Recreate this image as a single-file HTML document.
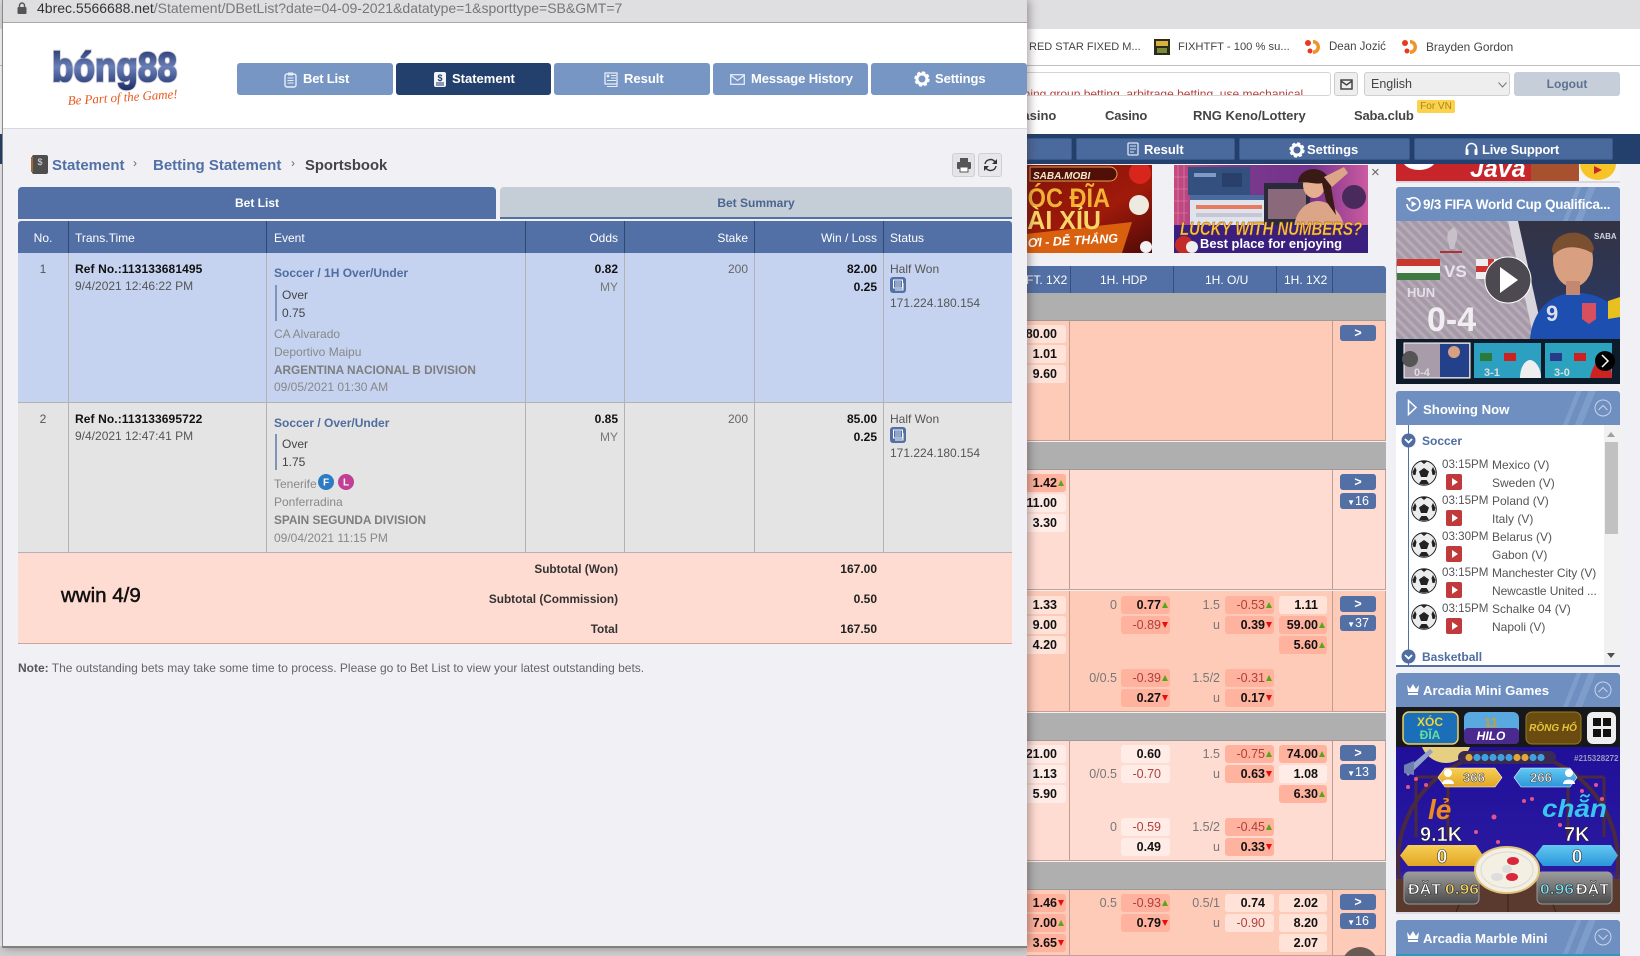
<!DOCTYPE html>
<html><head><meta charset="utf-8"><title>Statement</title>
<style>
html{margin:0;padding:0;width:1640px;height:956px;overflow:hidden}
body{margin:0;padding:0;position:relative;width:1640px;height:956px;overflow:hidden;background:#f0f0f5;font-family:"Liberation Sans","Noto Sans CJK SC",sans-serif;font-size:12px;color:#333}
div,span.t{position:absolute;box-sizing:border-box}
.t{position:absolute;white-space:nowrap;line-height:16px;height:16px}
.r{text-align:right}.b{font-weight:bold}
.gy{color:#888}.bl{color:#4f6d9f}
.nav{top:63px;height:32px;background:#7896c4;border-radius:3px;color:#fff;font-weight:bold;font-size:13px;line-height:32px}
.nav.on{background:#23406c}
.nav span{position:absolute;top:0;white-space:nowrap}
.nav svg,.nb svg{position:absolute}
.col{top:253px;width:1px;height:300px;background:#b2b2b2}
.hc{top:221px;width:1px;height:32px;background:#2d4875}
.grp{left:1020px;width:366px;border-bottom:1px solid #c79f93;border-right:1px solid #c79f93}
.grey{left:1020px;width:366px;height:28px;background:#afafaf;border-bottom:1px solid #9b9b9b}
.v{width:1px;background:#c19c90}
.o{height:18px;line-height:19px;border-radius:3px;text-align:right;padding-right:9px;font-weight:bold;color:#111;font-size:12.5px;background:rgba(255,255,255,.45)}
.x0{left:1010px;width:56px}.xa{left:1121px;width:49px}.xb{left:1225px;width:49px}.xd{left:1279px;width:48px}
.h{background:#ffb29d}.n{color:#b0403c;font-weight:normal}
.u::after,.d::after{content:"";position:absolute;right:2px;top:6px;width:0;height:0;border-left:3px solid transparent;border-right:3px solid transparent}
.u::after{border-bottom:6px solid #5aa614}.d::after{border-top:6px solid #e80c0c}
.l{color:#777;width:50px;text-align:right;height:18px;line-height:19px;font-size:12.5px}
.la{left:1067px}.lb{left:1170px}
.btn{left:1340px;width:36px;height:16px;border-radius:3px;background:#5270a5;color:#fff;text-align:center;line-height:16px;font-size:12.5px}
.nb{top:138px;height:22px;background:#4a6a9d;border:1px solid #3a5888;border-radius:2px;color:#fff;font-weight:bold;font-size:13px;line-height:22px}
.nb span{position:absolute;white-space:nowrap;top:0}
.ph{left:1396px;width:224px;background:linear-gradient(112deg,#6f8fc0 0 76%,#7f9dca 76% 78%,#6f8fc0 78% 81%,#7f9dca 81% 84%,#6f8fc0 84%);border-radius:3px 3px 0 0;color:#fff;font-weight:bold}
.team{left:1492px;font-size:12px;color:#555}
.tm{left:1442px;font-size:11.6px;color:#555}
.rb{left:1446px;width:16px;height:16px;border-radius:2px;background:#c0393b}
.rb::after{content:"";position:absolute;left:6px;top:4px;border-left:6px solid #fff;border-top:4px solid transparent;border-bottom:4px solid transparent}
svg{display:block}
</style></head><body>

<svg width="0" height="0" style="position:absolute"><defs>
<g id="ball"><circle cx="13" cy="13" r="12.300" fill="#ececec" stroke="#222"/><path d="M13 8l5 3.500-2 5.500h-6l-2-5.500z" fill="#222"/><path d="M10 1.500c2-.6 4-.6 6 0l-3 2.500zM1.500 12l2.500-5 1.500 3-1 5-2 0zM24.500 12l-2.500-5-1.500 3 1 5 2 0zM8 23.500l2.500-3.500 5 0 2.500 3.500c-3 1.300-7 1.300-10 0z" fill="#222"/></g>
<g id="gear"><circle cx="8" cy="8" r="6.200" fill="none" stroke="#fff" stroke-width="3" stroke-dasharray="2.800 2.070"/><circle cx="8" cy="8" r="5" fill="none" stroke="#fff" stroke-width="3"/></g>
<g id="fav"><circle cx="3" cy="3" r="3" fill="#e8391d"/><circle cx="5" cy="11" r="2.500" fill="#e8391d"/><path d="M8 0c4 0 7 3 7 7s-3 7-7 7v-3.500c2 0 3.500-1.500 3.500-3.500S10 3.500 8 3.500z" fill="#f0932b"/></g>
</defs></svg>

<!-- ================= BACK PAGE ================= -->
<div style="left:0;top:0;width:1640px;height:29px;background:#dfdfe1"></div>
<div style="left:0;top:29px;width:1640px;height:37px;background:#fff;border-bottom:1px solid #c0c0c0"></div>
<span class="t" style="left:1029px;top:39px;font-size:11px;color:#444">RED STAR FIXED M...</span>
<svg style="position:absolute;left:1154px;top:39px" width="16" height="16"><rect width="16" height="16" fill="#2c2a18"/><rect x="2" y="2" width="12" height="5" fill="#d8b040"/><rect x="3" y="9" width="10" height="5" fill="#7a8a3a"/></svg>
<span class="t" style="left:1178px;top:39px;font-size:11.2px;color:#444">FIXHTFT - 100 % su...</span>
<svg style="position:absolute;left:1305px;top:40px" width="16" height="14"><use href="#fav"/></svg>
<span class="t" style="left:1329px;top:39px;font-size:11.5px;color:#444">Dean Jozić</span>
<svg style="position:absolute;left:1402px;top:40px" width="16" height="14"><use href="#fav"/></svg>
<span class="t" style="left:1426px;top:39px;font-size:11.9px;color:#444">Brayden Gordon</span>

<div style="left:0;top:66px;width:1640px;height:68px;background:#fff"></div>
<div style="left:1000px;top:72px;width:331px;height:24px;background:#fff;border:1px solid #d5d5d5;border-radius:3px;overflow:hidden"><span class="t" style="left:20px;top:13px;color:#b5403a;font-size:12px">ining group betting, arbitrage betting, use mechanical</span></div>
<div style="left:1334px;top:72px;width:24px;height:24px;background:#eee;border:1px solid #ccc;border-radius:3px"><svg style="position:absolute;left:5px;top:6px" width="13" height="11"><rect x="1" y="1" width="11" height="9" fill="none" stroke="#444" stroke-width="1.5"/><path d="M1 2l5.500 4L12 2" fill="none" stroke="#444" stroke-width="1.500"/></svg></div>
<div style="left:1364px;top:72px;width:146px;height:24px;background:#eee;border:1px solid #d0d0d0;border-radius:3px"><span class="t" style="left:6px;top:3px;color:#444;font-size:12.500px">English</span><svg style="position:absolute;left:133px;top:9px" width="9" height="6"><path d="M0.500 0.500L4.500 5l4-4.500" fill="none" stroke="#777"/></svg></div>
<div style="left:1514px;top:72px;width:106px;height:24px;background:#c5ced9;border-radius:3px;text-align:center;line-height:24px;font-weight:bold;color:#5d7290;font-size:12px">Logout</div>

<span class="t b" style="left:1013px;top:108px;font-size:13px;color:#444">Casino</span>
<span class="t b" style="left:1105px;top:108px;font-size:13px;color:#444;letter-spacing:-.2px">Casino</span>
<span class="t b" style="left:1193px;top:108px;font-size:13px;color:#444">RNG Keno/Lottery</span>
<span class="t b" style="left:1354px;top:108px;font-size:13px;color:#444;letter-spacing:-.2px">Saba.club</span>
<div style="left:1417px;top:100px;width:38px;height:13px;background:#fbd24a;border-radius:2px;color:#a8842a;font-size:10px;text-align:center;line-height:13px">For VN</div>

<div style="left:0;top:134px;width:1640px;height:30px;background:#23406c"></div>
<div class="nb" style="left:1000px;width:72px"></div>
<div class="nb" style="left:1076px;width:159px"><svg style="left:50px;top:3px" width="12" height="14"><rect x="1" y="1" width="10" height="12" rx="1" fill="none" stroke="#dfe6f2" stroke-width="1.300"/><path d="M3 4h6M3 7h6M3 10h4" stroke="#dfe6f2"/></svg><span style="left:67px">Result</span></div>
<div class="nb" style="left:1239px;width:171px"><svg style="left:49px;top:3px" width="16" height="16" viewBox="0 0 16 16"><use href="#gear"/></svg><span style="left:67px">Settings</span></div>
<div class="nb" style="left:1414px;width:199px"><svg style="left:50px;top:3px" width="13" height="14"><path d="M1.500 9V6.500a5 5 0 0 1 10 0V9" fill="none" stroke="#fff" stroke-width="1.600"/><rect x="0.500" y="7" width="3" height="6" rx="1" fill="#fff"/><rect x="9.500" y="7" width="3" height="6" rx="1" fill="#fff"/></svg><span style="left:67px;letter-spacing:-.2px">Live Support</span></div>

<!-- ad 1 -->
<svg style="position:absolute;left:1000px;top:165px" width="152" height="88" viewBox="0 0 152 88">
<defs><linearGradient id="a1" x1="0" y1="0" x2="1" y2="1"><stop offset="0" stop-color="#7a1208"/><stop offset=".6" stop-color="#a01a0a"/><stop offset="1" stop-color="#4d0a08"/></linearGradient></defs>
<rect width="152" height="88" fill="url(#a1)"/>
<path d="M0 72L132 57l-10 31H0z" fill="#d9600f"/>
<path d="M30 2h80a7 7 0 0 1 0 14H30z" fill="#501008" stroke="#e7a04a"/>
<circle cx="140" cy="8" r="11" fill="#d8261c"/><circle cx="139" cy="40" r="10" fill="#efeae0"/>
<text x="33" y="14" font-size="10" font-weight="bold" font-style="italic" fill="#f4e7c8" font-family="Liberation Sans">SABA.MOBI</text>
<text x="12" y="42" font-size="27" font-weight="bold" fill="#f3b134" font-family="Liberation Sans" textLength="98" lengthAdjust="spacingAndGlyphs">XÓC ĐĨA</text>
<text x="12" y="64" font-size="26" font-weight="bold" fill="#f8d667" font-family="Liberation Sans" textLength="89" lengthAdjust="spacingAndGlyphs">TÀI XỈU</text>
<text x="28" y="82" font-size="12.500" font-weight="bold" font-style="italic" fill="#fff" font-family="Liberation Sans" transform="rotate(-3 30 82)">ƠI - DỄ THẮNG</text>
<circle cx="146" cy="82" r="6" fill="#f2f2f2"/>
</svg>
<!-- ad 2 -->
<svg style="position:absolute;left:1174px;top:165px" width="194" height="88" viewBox="0 0 194 88">
<defs><linearGradient id="a2" x1="0" y1="0" x2="1" y2="0"><stop offset="0" stop-color="#c84a7e"/><stop offset=".3" stop-color="#7a3a8c"/><stop offset=".7" stop-color="#74328c"/><stop offset="1" stop-color="#cc5aa0"/></linearGradient></defs>
<rect width="194" height="88" fill="url(#a2)"/>
<g stroke="#e58ab0" stroke-width=".6"><path d="M4 0v62M10 0v62M0 12h14M0 24h14M0 36h14M0 48h14"/></g>
<rect x="14" y="2" width="62" height="28" fill="#33507f"/><rect x="20" y="8" width="22" height="4" fill="#7f9bc9"/><rect x="48" y="8" width="20" height="14" fill="#2a3f6a"/>
<rect x="16" y="30" width="78" height="30" fill="#dfe3ea"/><rect x="16" y="30" width="78" height="5" fill="#4a6a9f"/><rect x="22" y="40" width="66" height="4" fill="#e87a62"/><rect x="22" y="48" width="66" height="4" fill="#c6c6d6"/>
<rect x="90" y="18" width="46" height="42" fill="#2a2a3a"/><rect x="94" y="24" width="38" height="30" fill="#8a6a7a"/>
<path d="M120 62c2-18 14-26 24-26s24 10 26 26z" fill="#dca587"/>
<ellipse cx="140" cy="20" rx="11" ry="13" fill="#e6b090"/>
<path d="M124 18c0-16 26-20 32-2l6 34-10-14-4-18c-6 2-14-2-24 0z" fill="#3a1a14"/>
<path d="M150 12l20-10 4 6-16 14z" fill="#dca587"/>
<circle cx="180" cy="32" r="12" fill="#4a2a5c"/>
<rect y="60" width="194" height="28" fill="#3a1f7e"/>
<text x="6" y="70" font-size="18" font-weight="bold" font-style="italic" fill="#f2c83c" stroke="#9a3a20" stroke-width=".4" font-family="Liberation Sans" textLength="182" lengthAdjust="spacingAndGlyphs">LUCKY WITH NUMBERS?</text>
<text x="26" y="83" font-size="13" font-weight="bold" fill="#fff" font-family="Liberation Sans" textLength="142" lengthAdjust="spacingAndGlyphs">Best place for enjoying</text>
<circle cx="10" cy="80" r="9" fill="#c42a2a"/><circle cx="18" cy="82" r="6" fill="#eee"/>
</svg>
<span class="t" style="left:1371px;top:165px;font-size:15px;color:#666">×</span>

<!-- top right banner -->
<svg style="position:absolute;left:1396px;top:164px" width="224" height="17" viewBox="0 0 224 17">
<rect width="224" height="17" fill="#c8252b"/><path d="M8 0c6 8 24 8 30 0z" fill="#fff"/>
<text x="74" y="13" font-size="25" font-weight="bold" font-style="italic" fill="#fff" font-family="Liberation Sans">Java</text>
<rect x="135" width="48" height="17" fill="#a8512f"/><rect x="183" width="41" height="17" fill="#f3f3f3"/>
<path d="M184 0h36a18 16 0 0 1-36 0z" fill="#f6c427"/><path d="M198 2l8 4-8 4z" fill="#c8252b"/>
</svg>
<div style="left:1396px;top:181px;width:224px;height:2px;background:#d8d8e2"></div>

<!-- video panel -->
<div class="ph" style="top:187px;height:34px;font-size:13.500px;line-height:36px"><svg style="position:absolute;left:9px;top:9px" width="16" height="16"><path d="M4 3.500A6.500 6.500 0 1 1 2 8" fill="none" stroke="#fff" stroke-width="1.600"/><path d="M1 2l5 0-1 4z" fill="#fff"/><path d="M6.500 5l5 3-5 3z" fill="#fff"/></svg><span style="position:absolute;left:27px;top:0;white-space:nowrap;letter-spacing:-.25px">9/3 FIFA World Cup Qualifica...</span></div>
<svg style="position:absolute;left:1396px;top:221px" width="224" height="163" viewBox="0 0 224 163">
<defs><pattern id="st" width="7" height="7" patternUnits="userSpaceOnUse" patternTransform="rotate(-45)"><rect width="7" height="7" fill="#a79aa8"/><rect width="3" height="7" fill="#b6abb6"/></pattern>
<linearGradient id="pb" x1="0" y1="0" x2="0" y2="1"><stop offset="0" stop-color="#334"/><stop offset="1" stop-color="#2a3a66"/></linearGradient></defs>
<rect width="224" height="118" fill="url(#st)"/>
<path d="M118 0h106v118H144z" fill="url(#pb)"/>
<path d="M112 0h10l26 118h-10z" fill="#d8d6dc"/>
<path d="M134 118c2-24 16-44 42-46 24-2 44 12 48 22v24z" fill="#1d4fb0"/>
<ellipse cx="177" cy="39" rx="20" ry="27" fill="#d8a081"/>
<path d="M156 30c0-22 38-26 42-2l-2 4c-10-6-28-10-38 2z" fill="#7a5030"/>
<rect x="170" y="60" width="14" height="14" fill="#c48870"/>
<text x="150" y="100" font-size="22" font-weight="bold" fill="#dde" font-family="Liberation Sans">9</text>
<path d="M186 82h14v16l-7 5-7-5z" fill="#d85060"/>
<path d="M212 80l12-4v20l-12 2z" fill="#e8c020"/>
<text x="198" y="18" font-size="8" font-weight="bold" fill="#cfd3dd" font-family="Liberation Sans">SABA</text>
<path d="M58 6c4 4 4 8 2 14l-2 8h-4l-2-8c-2-6 0-10 6-14z" fill="#c7c0c8"/>
<rect x="44" y="30" width="22" height="2" fill="#a33"/>
<rect x="1" y="38" width="43" height="7" fill="#c8382c"/><rect x="1" y="45" width="43" height="7" fill="#f4f4f4"/><rect x="1" y="52" width="43" height="7" fill="#3e7a42"/>
<text x="48" y="56" font-size="17" font-weight="bold" fill="#e8e4ea" font-family="Liberation Sans">VS</text>
<rect x="80" y="38" width="30" height="20" fill="#eee"/><rect x="92" y="38" width="6" height="20" fill="#c33"/><rect x="80" y="45" width="30" height="6" fill="#c33"/>
<text x="11" y="76" font-size="13" font-weight="bold" fill="#e4dfe6" font-family="Liberation Sans">HUN</text>
<text x="31" y="110" font-size="34" font-weight="bold" fill="#f1eef2" font-family="Liberation Sans">0-4</text>
<circle cx="112" cy="59" r="23" fill="#4c4a50" stroke="#fff" stroke-width="1"/><path d="M104 46l18 13-18 13z" fill="#fff"/>
<rect y="118" width="224" height="45" fill="#0d1b2a"/>
<rect x="8" y="122" width="66" height="35" fill="#a89caa" stroke="#fff"/><rect x="44" y="123" width="29" height="33" fill="#23408a"/><circle cx="58" cy="131" r="6" fill="#d8a081"/><circle cx="14" cy="138" r="8" fill="#555"/>
<rect x="78" y="122" width="67" height="35" fill="#2da0c2"/><rect x="84" y="132" width="12" height="8" fill="#2a7a3a"/><rect x="108" y="132" width="12" height="8" fill="#cf2020"/><path d="M124 157c0-12 6-18 10-18s11 6 11 18z" fill="#eee"/>
<rect x="149" y="122" width="67" height="35" fill="#2ba3bf"/><rect x="154" y="132" width="12" height="8" fill="#2a3a8a"/><rect x="178" y="132" width="12" height="8" fill="#cf2020"/><path d="M194 157c2-12 8-18 12-18s10 6 10 18z" fill="#c22"/>
<text x="18" y="155" font-size="11" fill="#ddd" font-weight="bold" font-family="Liberation Sans">0-4</text>
<text x="88" y="155" font-size="11" fill="#ddd" font-weight="bold" font-family="Liberation Sans">3-1</text>
<text x="158" y="155" font-size="11" fill="#ddd" font-weight="bold" font-family="Liberation Sans">3-0</text>
<circle cx="209" cy="140" r="10" fill="#000"/><path d="M206 134l6 6-6 6" fill="none" stroke="#fff" stroke-width="1.500"/>
</svg>

<!-- Showing Now -->
<div style="left:1396px;top:425px;width:224px;height:242px;background:#fff;border-bottom:2px solid #5270a5"></div>
<div class="ph" style="top:391px;height:34px;font-size:13.200px;line-height:37px"><svg style="position:absolute;left:11px;top:8px" width="11" height="17"><path d="M1.500 1.500L9 8.500 1.500 15.500z" fill="none" stroke="#fff" stroke-width="1.500"/></svg><span style="position:absolute;left:27px;top:0;white-space:nowrap">Showing Now</span><svg style="position:absolute;left:198px;top:8px" width="18" height="18"><circle cx="9" cy="9" r="8" fill="none" stroke="#c7d4e9"/><path d="M4.500 11L9 6.500 13.500 11" fill="none" stroke="#c7d4e9"/></svg></div>
<div style="left:1408px;top:425px;width:1px;height:240px;background:#5270a5"></div>
<div style="left:1604px;top:425px;width:16px;height:240px;background:#f1f1f1"></div>
<div style="left:1605px;top:442px;width:13px;height:92px;background:#c1c1c1"></div>
<svg style="position:absolute;left:1606px;top:431px" width="10" height="7"><path d="M1 6l4-5 4 5z" fill="#a0a0a0"/></svg>
<svg style="position:absolute;left:1606px;top:652px" width="10" height="7"><path d="M1 1l4 5 4-5z" fill="#505050"/></svg>
<svg style="position:absolute;left:1401px;top:433px" width="15" height="15"><circle cx="7.500" cy="7.500" r="7" fill="#4f6da0"/><path d="M4 6l3.500 3.500L11 6" fill="none" stroke="#fff" stroke-width="1.800"/></svg>
<span class="t b" style="left:1422px;top:433px;color:#4f6da0;font-size:12px">Soccer</span>
<svg style="position:absolute;left:1401px;top:649px" width="15" height="15"><circle cx="7.500" cy="7.500" r="7" fill="#4f6da0"/><path d="M4 6l3.500 3.500L11 6" fill="none" stroke="#fff" stroke-width="1.800"/></svg>
<span class="t b" style="left:1422px;top:649px;color:#4f6da0;font-size:12px">Basketball</span>
<svg style="position:absolute;left:1411px;top:460px" width="26" height="26"><use href="#ball"/></svg>
<svg style="position:absolute;left:1411px;top:496px" width="26" height="26"><use href="#ball"/></svg>
<svg style="position:absolute;left:1411px;top:532px" width="26" height="26"><use href="#ball"/></svg>
<svg style="position:absolute;left:1411px;top:568px" width="26" height="26"><use href="#ball"/></svg>
<svg style="position:absolute;left:1411px;top:604px" width="26" height="26"><use href="#ball"/></svg>
<div class="rb" style="top:474px"></div><div class="rb" style="top:510px"></div><div class="rb" style="top:546px"></div><div class="rb" style="top:582px"></div><div class="rb" style="top:618px"></div>
<span class="t tm" style="top:457px">03:15PM</span><span class="t team" style="top:457px">Mexico (V)</span><span class="t team" style="top:475px">Sweden (V)</span>
<span class="t tm" style="top:493px">03:15PM</span><span class="t team" style="top:493px">Poland (V)</span><span class="t team" style="top:511px">Italy (V)</span>
<span class="t tm" style="top:529px">03:30PM</span><span class="t team" style="top:529px">Belarus (V)</span><span class="t team" style="top:547px">Gabon (V)</span>
<span class="t tm" style="top:565px">03:15PM</span><span class="t team" style="top:565px;letter-spacing:-.1px">Manchester City (V)</span><span class="t team" style="top:583px;letter-spacing:-.1px">Newcastle United ...</span>
<span class="t tm" style="top:601px">03:15PM</span><span class="t team" style="top:601px">Schalke 04 (V)</span><span class="t team" style="top:619px">Napoli (V)</span>

<!-- Arcadia -->
<div class="ph" style="top:673px;height:34px;font-size:13.200px;line-height:36px"><svg style="position:absolute;left:10px;top:10px" width="14" height="13"><path d="M1 2l3 4 3-5 3 5 3-4-1 7H2zM2 10h10v2H2z" fill="#fff"/></svg><span style="position:absolute;left:27px;top:0;white-space:nowrap">Arcadia Mini Games</span><svg style="position:absolute;left:198px;top:8px" width="18" height="18"><circle cx="9" cy="9" r="8" fill="none" stroke="#c7d4e9"/><path d="M4.500 11L9 6.500 13.500 11" fill="none" stroke="#c7d4e9"/></svg></div>
<svg style="position:absolute;left:1396px;top:707px" width="224" height="205" viewBox="0 0 224 205" font-family="Liberation Sans">
<defs><linearGradient id="gb" x1="0" y1="0" x2="0" y2="1"><stop offset="0" stop-color="#1f0f9a"/><stop offset=".75" stop-color="#2b1aa0"/><stop offset="1" stop-color="#8a86cf"/></linearGradient>
<linearGradient id="yl" x1="0" y1="0" x2="0" y2="1"><stop offset="0" stop-color="#f7d055"/><stop offset="1" stop-color="#e2a424"/></linearGradient>
<linearGradient id="cy" x1="0" y1="0" x2="0" y2="1"><stop offset="0" stop-color="#64c8f2"/><stop offset="1" stop-color="#2a96da"/></linearGradient>
<linearGradient id="gr" x1="0" y1="0" x2="0" y2="1"><stop offset="0" stop-color="#9c9c9c"/><stop offset="1" stop-color="#4a4a4a"/></linearGradient></defs>
<rect y="40" width="224" height="165" fill="url(#gb)"/>
<circle cx="50" cy="30" r="26" fill="#e6cf80"/>
<circle cx="112" cy="155" r="110" fill="none" stroke="#4a2a3e" stroke-width="4"/>
<path d="M20 70h32M172 70h36M20 70v60M208 70v60M52 70v60M172 70v60" stroke="#4a2a3e" stroke-width="3" fill="none"/>
<rect width="224" height="40" fill="#17181c"/>
<rect x="7" y="5" width="55" height="32" rx="6" fill="#1b6fb8" stroke="#f1cf5b" stroke-width="1.500"/>
<text x="34" y="19" text-anchor="middle" font-size="12" font-weight="bold" fill="#e8d63a">XÓC</text><text x="34" y="32" text-anchor="middle" font-size="12" font-weight="bold" fill="#63e0a0">ĐĨA</text>
<rect x="68" y="5" width="55" height="32" rx="6" fill="#5aa8e0"/><rect x="68" y="21" width="55" height="16" rx="4" fill="#4a2a8e"/>
<text x="95" y="20" text-anchor="middle" font-size="13" font-weight="bold" fill="#c8a030">11</text><text x="95" y="33" text-anchor="middle" font-size="12" font-weight="bold" font-style="italic" fill="#fff">HILO</text>
<rect x="130" y="5" width="55" height="32" rx="6" fill="#6a4c10" stroke="#9a7a26"/><text x="157" y="24" text-anchor="middle" font-size="10" font-weight="bold" font-style="italic" fill="#e7c53a">RỒNG HỔ</text>
<rect x="191" y="5" width="29" height="32" rx="6" fill="#eee"/><rect x="197" y="11" width="8" height="8" fill="#111"/><rect x="207" y="11" width="8" height="8" fill="#111"/><rect x="197" y="22" width="8" height="8" fill="#111"/><rect x="207" y="22" width="8" height="8" fill="#111"/>
<path d="M8 64l26-22 3 3-25 24z" fill="#8fa0cc"/><path d="M8 58l10-4 0 14-10-2z" fill="#6e7fb0"/>
<rect x="62" y="44" width="98" height="13" rx="6.500" fill="#3a2a52"/>
<g fill="#3fa0e0"><circle cx="73" cy="50.500" r="3.600" fill="#e0a838"/><circle cx="81" cy="50.500" r="3.600"/><circle cx="89" cy="50.500" r="3.600"/><circle cx="97" cy="50.500" r="3.600"/><circle cx="105" cy="50.500" r="3.600"/><circle cx="113" cy="50.500" r="3.600"/><circle cx="121" cy="50.500" r="3.600" fill="#e0a838"/><circle cx="129" cy="50.500" r="3.600" fill="#e0a838"/><circle cx="137" cy="50.500" r="3.600"/><circle cx="145" cy="50.500" r="3.600"/></g>
<text x="178" y="54" font-size="8" font-weight="bold" fill="#9a9ab8">#215328272</text>
<path d="M49 61h50l7 9.500-7 9.500H49l-7-9.500z" fill="url(#yl)" stroke="#fff" stroke-width=".6"/><path d="M125 61h49l7 9.500-7 9.500h-49l-7-9.500z" fill="url(#cy)" stroke="#fff" stroke-width=".6"/>
<circle cx="52" cy="66" r="4" fill="#fff"/><path d="M46 77c0-6 12-6 12 0z" fill="#fff"/><circle cx="173" cy="66" r="4" fill="#fff"/><path d="M167 77c0-6 12-6 12 0z" fill="#fff"/>
<text x="78" y="75" text-anchor="middle" font-size="13" font-weight="bold" fill="#fff" stroke="#333" stroke-width=".5">366</text><text x="145" y="75" text-anchor="middle" font-size="13" font-weight="bold" fill="#fff" stroke="#333" stroke-width=".5">266</text>
<g fill="#e2558c"><circle cx="20" cy="72" r="2"/><circle cx="30" cy="78" r="2"/><circle cx="12" cy="80" r="2"/><circle cx="128" cy="94" r="2"/><circle cx="136" cy="92" r="2"/><circle cx="98" cy="110" r="2.500"/><circle cx="186" cy="84" r="2"/><circle cx="206" cy="92" r="2"/><circle cx="200" cy="78" r="2"/><circle cx="164" cy="118" r="2"/><circle cx="80" cy="125" r="2"/><circle cx="102" cy="135" r="2"/></g>
<text x="32" y="112" font-size="28" font-weight="bold" font-style="italic" fill="#f08a1e">lẻ</text>
<text x="146" y="110" font-size="25" font-weight="bold" font-style="italic" fill="#38c6f0" textLength="65" lengthAdjust="spacingAndGlyphs">chẵn</text>
<text x="24" y="134" font-size="20" font-weight="bold" fill="#fff" stroke="#222" stroke-width=".6">9.1K</text>
<text x="168" y="134" font-size="20" font-weight="bold" fill="#fff" stroke="#222" stroke-width=".6">7K</text>
<path d="M12 138h68l7 10.500-7 10.500H12L4 148.500z" fill="url(#yl)"/><path d="M147 138h68l7 10.500-7 10.500h-68l-8-10.500z" fill="url(#cy)"/>
<rect y="172" width="224" height="33" fill="#5a3a2e"/><path d="M60 205l14-33M160 205l-14-33M112 172v33" stroke="#38221a"/>
<text x="46" y="156" text-anchor="middle" font-size="19" font-weight="bold" fill="#fff" stroke="#333" stroke-width=".6">0</text><text x="181" y="156" text-anchor="middle" font-size="19" font-weight="bold" fill="#fff" stroke="#333" stroke-width=".6">0</text>
<rect x="8" y="165" width="75" height="32" rx="5" fill="url(#gr)" stroke="#999"/><rect x="141" y="165" width="75" height="32" rx="5" fill="url(#gr)" stroke="#999"/>
<text x="12" y="187" font-size="15" font-weight="bold" fill="#fff" stroke="#222" stroke-width=".5" textLength="33" lengthAdjust="spacingAndGlyphs">ĐẶT</text><text x="49" y="187" font-size="15" font-weight="bold" fill="#f6d36a" stroke="#222" stroke-width=".5" textLength="34" lengthAdjust="spacingAndGlyphs">0.96</text>
<text x="144" y="187" font-size="15" font-weight="bold" fill="#7fe1f2" stroke="#222" stroke-width=".5" textLength="34" lengthAdjust="spacingAndGlyphs">0.96</text><text x="180" y="187" font-size="15" font-weight="bold" fill="#fff" stroke="#222" stroke-width=".5" textLength="33" lengthAdjust="spacingAndGlyphs">ĐẶT</text>
<ellipse cx="111" cy="163" rx="32" ry="23" fill="#f4efe3" stroke="#e0c27a" stroke-width="2"/><ellipse cx="111" cy="163" rx="26" ry="18" fill="none" stroke="#d8d8d8"/>
<ellipse cx="117" cy="154" rx="6" ry="4" fill="#d8283a"/><ellipse cx="111" cy="162" rx="5" ry="4" fill="#ddd"/><ellipse cx="101" cy="170" rx="6" ry="4" fill="#ddd"/><ellipse cx="116" cy="170" rx="6" ry="4" fill="#d8283a"/>
</svg>
<div style="left:1396px;top:912px;width:224px;height:2px;background:#dcdce6"></div>
<div class="ph" style="top:920px;height:34px;font-size:13.200px;line-height:37px"><svg style="position:absolute;left:10px;top:10px" width="14" height="13"><path d="M1 2l3 4 3-5 3 5 3-4-1 7H2zM2 10h10v2H2z" fill="#fff"/></svg><span style="position:absolute;left:27px;top:0;white-space:nowrap">Arcadia Marble Mini</span><svg style="position:absolute;left:198px;top:8px" width="18" height="18"><circle cx="9" cy="9" r="8" fill="none" stroke="#c7d4e9"/><path d="M4.500 7L9 11.500 13.500 7" fill="none" stroke="#c7d4e9"/></svg></div>
<div style="left:1396px;top:954px;width:224px;height:2px;background:#2a9ac2"></div>

<!-- odds table -->
<div style="left:1020px;top:266px;width:366px;height:27px;background:#5270a5;border-radius:3px 3px 0 0"></div>
<div style="left:1070px;top:266px;width:1px;height:27px;background:#34507f"></div><div style="left:1173px;top:266px;width:1px;height:27px;background:#34507f"></div><div style="left:1276px;top:266px;width:1px;height:27px;background:#34507f"></div><div style="left:1332px;top:266px;width:1px;height:27px;background:#34507f"></div>
<span class="t" style="left:1026px;top:272px;color:#fff">FT. 1X2</span>
<span class="t" style="left:1100px;top:272px;color:#fff">1H. HDP</span>
<span class="t" style="left:1205px;top:272px;color:#fff">1H. O/U</span>
<span class="t" style="left:1284px;top:272px;color:#fff">1H. 1X2</span>

<div class="grey" style="top:293px"></div>
<div class="grp" style="top:321px;height:120px;background:#ffcbb9"></div>
<div class="grey" style="top:442px"></div>
<div class="grp" style="top:470px;height:120px;background:#ffdcd2"></div>
<div class="grp" style="top:591px;height:121px;background:#ffcbb9"></div>
<div class="grey" style="top:713px"></div>
<div class="grp" style="top:741px;height:120px;background:#ffdcd2"></div>
<div class="grey" style="top:862px"></div>
<div class="grp" style="top:890px;height:66px;background:#ffcbb9"></div>
<div class="v" style="left:1069px;top:321px;height:119px"></div><div class="v" style="left:1332px;top:321px;height:119px"></div>
<div class="v" style="left:1069px;top:470px;height:119px"></div><div class="v" style="left:1332px;top:470px;height:119px"></div>
<div class="v" style="left:1069px;top:591px;height:120px"></div><div class="v" style="left:1332px;top:591px;height:120px"></div>
<div class="v" style="left:1069px;top:741px;height:119px"></div><div class="v" style="left:1332px;top:741px;height:119px"></div>
<div class="v" style="left:1069px;top:890px;height:66px"></div><div class="v" style="left:1332px;top:890px;height:66px"></div>

<!-- G1 -->
<div class="o x0" style="top:325px">80.00</div><div class="o x0" style="top:345px">1.01</div><div class="o x0" style="top:365px">9.60</div>
<div class="btn b" style="top:325px">&gt;</div>
<!-- G2 -->
<div class="o x0 h u" style="top:474px">1.42</div><div class="o x0" style="top:494px">11.00</div><div class="o x0" style="top:514px">3.30</div>
<div class="btn b" style="top:474px">&gt;</div><div class="btn" style="top:493px"><span style="font-size:8px">▼</span>16</div>
<!-- G3 -->
<div class="o x0" style="top:596px">1.33</div><div class="o x0" style="top:616px">9.00</div><div class="o x0" style="top:636px">4.20</div>
<div class="l la" style="top:596px">0</div><div class="o xa h u" style="top:596px">0.77</div><div class="o xa h d n" style="top:616px">-0.89</div>
<div class="l la" style="top:669px">0/0.5</div><div class="o xa h u n" style="top:669px">-0.39</div><div class="o xa h d" style="top:689px">0.27</div>
<div class="l lb" style="top:596px">1.5</div><div class="o xb h u n" style="top:596px">-0.53</div><div class="l lb" style="top:616px">u</div><div class="o xb h d" style="top:616px">0.39</div>
<div class="l lb" style="top:669px">1.5/2</div><div class="o xb h u n" style="top:669px">-0.31</div><div class="l lb" style="top:689px">u</div><div class="o xb h d" style="top:689px">0.17</div>
<div class="o xd" style="top:596px">1.11</div><div class="o xd h u" style="top:616px">59.00</div><div class="o xd h u" style="top:636px">5.60</div>
<div class="btn b" style="top:596px">&gt;</div><div class="btn" style="top:615px"><span style="font-size:8px">▼</span>37</div>
<!-- G4 -->
<div class="o x0" style="top:745px">21.00</div><div class="o x0" style="top:765px">1.13</div><div class="o x0" style="top:785px">5.90</div>
<div class="o xa" style="top:745px">0.60</div><div class="l la" style="top:765px">0/0.5</div><div class="o xa n" style="top:765px">-0.70</div>
<div class="l la" style="top:818px">0</div><div class="o xa n" style="top:818px">-0.59</div><div class="o xa" style="top:838px">0.49</div>
<div class="l lb" style="top:745px">1.5</div><div class="o xb h u n" style="top:745px">-0.75</div><div class="l lb" style="top:765px">u</div><div class="o xb h d" style="top:765px">0.63</div>
<div class="l lb" style="top:818px">1.5/2</div><div class="o xb h u n" style="top:818px">-0.45</div><div class="l lb" style="top:838px">u</div><div class="o xb h d" style="top:838px">0.33</div>
<div class="o xd h u" style="top:745px">74.00</div><div class="o xd" style="top:765px">1.08</div><div class="o xd h u" style="top:785px">6.30</div>
<div class="btn b" style="top:745px">&gt;</div><div class="btn" style="top:764px"><span style="font-size:8px">▼</span>13</div>
<!-- G5 -->
<div class="o x0 h d" style="top:894px">1.46</div><div class="o x0 h u" style="top:914px">7.00</div><div class="o x0 h d" style="top:934px">3.65</div>
<div class="l la" style="top:894px">0.5</div><div class="o xa h u n" style="top:894px">-0.93</div><div class="o xa h d" style="top:914px">0.79</div>
<div class="l lb" style="top:894px">0.5/1</div><div class="o xb" style="top:894px">0.74</div><div class="l lb" style="top:914px">u</div><div class="o xb n" style="top:914px">-0.90</div>
<div class="o xd" style="top:894px">2.02</div><div class="o xd" style="top:914px">8.20</div><div class="o xd" style="top:934px">2.07</div>
<div class="btn b" style="top:894px">&gt;</div><div class="btn" style="top:913px"><span style="font-size:8px">▼</span>16</div>
<div style="left:1342px;top:947px;width:36px;height:36px;border-radius:50%;background:#6a5a55"></div>

<!-- ================= POPUP ================= -->
<div style="left:0;top:946px;width:1027px;height:10px;background:#d0d0d0;z-index:5"></div>
<div style="left:2px;top:0;width:1025px;height:948px;background:#f0f0f5;border-left:1px solid #8a8a8a;border-bottom:2px solid #808080;box-shadow:2px 0 9px rgba(60,40,40,.45);z-index:10;overflow:hidden">
<div style="left:0;top:0;width:1024px;height:23px;background:#dfdfe1;border-bottom:1px solid #a8a8a8"></div>
<svg style="position:absolute;left:14px;top:2px" width="10" height="12"><path d="M2.500 5V3.500a2.500 2.500 0 0 1 5 0V5" fill="none" stroke="#555" stroke-width="1.400"/><rect x="0.500" y="5" width="9" height="7" rx="1" fill="#555"/></svg>
<span class="t" style="left:34px;top:0;font-size:14px;color:#777"><span style="color:#333">4brec.5566688.net</span>/Statement/DBetList?date=04-09-2021&amp;datatype=1&amp;sporttype=SB&amp;GMT=7</span>
<div style="left:0;top:23px;width:1024px;height:106px;background:#fff;border-bottom:1px solid #d8d8dc"></div>

<svg style="position:absolute;left:44px;top:46px" width="140" height="66" viewBox="0 0 140 66">
<defs><linearGradient id="lg" x1="0" y1="0" x2="0" y2="1"><stop offset="0" stop-color="#17285e"/><stop offset=".5" stop-color="#6a80b8"/><stop offset="1" stop-color="#1c2d68"/></linearGradient></defs>
<text x="5" y="35" font-family="Liberation Sans" font-weight="bold" font-size="41" textLength="125" lengthAdjust="spacingAndGlyphs" fill="none" stroke="#d4d4da" stroke-width="3.500">bóng88</text>
<text x="5" y="35" font-family="Liberation Sans" font-weight="bold" font-size="41" textLength="125" lengthAdjust="spacingAndGlyphs" fill="url(#lg)" stroke="url(#lg)" stroke-width="1.600">bóng88</text>
<text x="21" y="59" font-family="Liberation Serif" font-style="italic" font-size="13" fill="#e8591f" textLength="110" lengthAdjust="spacing" transform="rotate(-3.600 21 59)">Be Part of the Game!</text>
</svg>

<!-- nav -->
<div class="nav" style="left:234px;width:156px"><svg style="left:47px;top:9px" width="13" height="16"><rect x="1" y="2" width="11" height="13" rx="2" fill="none" stroke="#e6edf7" stroke-width="1.400"/><rect x="4" y="0.500" width="5" height="3" fill="#e6edf7"/><path d="M3.500 6h6M3.500 8.500h6M3.500 11h6" stroke="#e6edf7"/></svg><span style="left:66px;letter-spacing:-.2px">Bet List</span></div>
<div class="nav on" style="left:393px;width:155px"><svg style="left:37px;top:8px" width="14" height="17"><rect x="1" y="1" width="12" height="15" rx="2" fill="#f2f4f8"/><text x="7" y="10" text-anchor="middle" font-size="9" font-weight="bold" fill="#23406c" font-family="Liberation Sans">$</text><path d="M3 12h8M3 14h8" stroke="#23406c"/></svg><span style="left:56px">Statement</span></div>
<div class="nav" style="left:551px;width:156px"><svg style="left:50px;top:9px" width="14" height="16"><rect x="1" y="1" width="12" height="11" fill="none" stroke="#e6edf7" stroke-width="1.300"/><path d="M3 14.500h10V4" fill="none" stroke="#e6edf7"/><circle cx="4" cy="4" r="1.500" fill="#e6edf7"/><path d="M7 3.500h5M7 6h5M3 8.500h9" stroke="#e6edf7"/></svg><span style="left:70px">Result</span></div>
<div class="nav" style="left:710px;width:155px"><svg style="left:17px;top:11px" width="15" height="11"><rect x="0.700" y="0.700" width="13.600" height="9.600" fill="none" stroke="#e6edf7" stroke-width="1.300"/><path d="M1 1.500l6.500 5 6.500-5" fill="none" stroke="#e6edf7" stroke-width="1.200"/></svg><span style="left:38px;letter-spacing:-.1px">Message History</span></div>
<div class="nav" style="left:868px;width:156px"><svg style="left:43px;top:8px" width="16" height="16" viewBox="0 0 16 16"><use href="#gear"/></svg><span style="left:64px;letter-spacing:-.1px">Settings</span></div>

<!-- breadcrumb -->
<svg style="position:absolute;left:28px;top:155px" width="18" height="20"><rect x="1" y="0" width="16" height="19" rx="2" fill="#4e4e4e"/><rect x="0" y="2" width="2" height="15" fill="#a06a3a"/><text x="9" y="10" text-anchor="middle" font-size="9" fill="#ddd" font-family="Liberation Sans">$</text></svg>
<span class="t b" style="left:49px;top:158px;font-size:15px;color:#5270a5">Statement</span>
<span class="t" style="left:130px;top:155px;font-size:12px;color:#666">›</span>
<span class="t b" style="left:150px;top:158px;font-size:15px;color:#5270a5">Betting Statement</span>
<span class="t" style="left:288px;top:155px;font-size:12px;color:#666">›</span>
<span class="t b" style="left:302px;top:158px;font-size:14.800px;color:#444">Sportsbook</span>
<div style="left:949px;top:153px;width:23px;height:24px;background:#e4e4e8;border:1px solid #cfcfd4;border-radius:3px"><svg style="position:absolute;left:4px;top:4px" width="14" height="15"><rect x="3" y="0" width="8" height="4" fill="#555"/><rect x="0" y="4" width="14" height="7" rx="1" fill="#555"/><rect x="3" y="9" width="8" height="5" fill="#fff" stroke="#555"/></svg></div>
<div style="left:975px;top:153px;width:24px;height:24px;background:#e8e8ec;border:1px solid #cfcfd4;border-radius:3px"><svg style="position:absolute;left:4px;top:4px" width="15" height="14"><path d="M2 6a5.500 5.500 0 0 1 10-2M13 8a5.500 5.500 0 0 1-10 2" fill="none" stroke="#333" stroke-width="1.400"/><path d="M14 1v5h-5zM1 13V8h5z" fill="#333"/></svg></div>

<!-- tabs -->
<div style="left:15px;top:187px;width:478px;height:32px;background:#5270a5;border-radius:4px 4px 0 0;text-align:center;line-height:32px;color:#fff;font-weight:bold">Bet List</div>
<div style="left:497px;top:187px;width:512px;height:32px;background:#c5ced7;border-bottom:2px solid #5270a5;border-radius:4px 4px 0 0;text-align:center;line-height:32px;color:#4a6592;font-weight:bold">Bet Summary</div>

<!-- table -->
<div style="left:15px;top:221px;width:994px;height:32px;background:#5270a5;border-radius:3px 3px 0 0"></div>
<div style="left:15px;top:253px;width:994px;height:150px;background:#c5d3f0;border-bottom:1px solid #b2b2b2"></div>
<div style="left:15px;top:403px;width:994px;height:150px;background:#e4e4e4;border-bottom:1px solid #b2b2b2"></div>
<div style="left:15px;top:553px;width:994px;height:91px;background:#ffdcd2;border-bottom:1px solid #c9a79d"></div>
<div class="hc" style="left:65px"></div><div class="hc" style="left:263px"></div><div class="hc" style="left:522px"></div><div class="hc" style="left:621px"></div><div class="hc" style="left:751px"></div><div class="hc" style="left:880px"></div>
<div class="col" style="left:65px"></div><div class="col" style="left:263px"></div><div class="col" style="left:522px"></div><div class="col" style="left:621px"></div><div class="col" style="left:751px"></div><div class="col" style="left:880px"></div>

<span class="t" style="left:15px;width:50px;text-align:center;top:230px;color:#fff">No.</span>
<span class="t" style="left:72px;top:230px;color:#fff">Trans.Time</span>
<span class="t" style="left:271px;top:230px;color:#fff">Event</span>
<span class="t r" style="left:515px;width:100px;top:230px;color:#fff">Odds</span>
<span class="t r" style="left:645px;width:100px;top:230px;color:#fff">Stake</span>
<span class="t r" style="left:774px;width:100px;top:230px;color:#fff">Win / Loss</span>
<span class="t" style="left:887px;top:230px;color:#fff">Status</span>

<!-- row 1 -->
<span class="t" style="left:15px;width:50px;text-align:center;top:261px;color:#555">1</span>
<span class="t b" style="left:72px;top:261px;color:#111;letter-spacing:.1px">Ref No.:113133681495</span>
<span class="t" style="left:72px;top:278px;color:#555">9/4/2021 12:46:22 PM</span>
<span class="t b bl" style="left:271px;top:265px">Soccer / 1H Over/Under</span>
<div style="left:272px;top:285px;width:2px;height:36px;background:#7f93b8"></div>
<span class="t" style="left:279px;top:287px;color:#444">Over</span>
<span class="t" style="left:279px;top:305px;color:#444">0.75</span>
<span class="t gy" style="left:271px;top:326px">CA Alvarado</span>
<span class="t gy" style="left:271px;top:344px">Deportivo Maipu</span>
<span class="t b gy" style="left:271px;top:362px;font-size:11.800px;color:#7d7d7d">ARGENTINA NACIONAL B DIVISION</span>
<span class="t gy" style="left:271px;top:379px">09/05/2021 01:30 AM</span>
<span class="t r b" style="left:515px;width:100px;top:261px;color:#111">0.82</span>
<span class="t r" style="left:515px;width:100px;top:279px;color:#777">MY</span>
<span class="t r" style="left:645px;width:100px;top:261px;color:#666">200</span>
<span class="t r b" style="left:774px;width:100px;top:261px;color:#111">82.00</span>
<span class="t r b" style="left:774px;width:100px;top:279px;color:#111">0.25</span>
<span class="t" style="left:887px;top:261px;color:#555">Half Won</span>
<svg style="position:absolute;left:887px;top:277px" width="16" height="16"><rect width="16" height="16" rx="3" fill="#5270a5"/><rect x="3.500" y="3" width="9" height="8" fill="none" stroke="#fff"/><path d="M5 13h8V6" fill="none" stroke="#fff"/><path d="M5 5h6M5 7h6M5 9h6" stroke="#fff" stroke-width=".8"/></svg>
<span class="t" style="left:887px;top:295px;color:#555">171.224.180.154</span>

<!-- row 2 -->
<span class="t" style="left:15px;width:50px;text-align:center;top:411px;color:#555">2</span>
<span class="t b" style="left:72px;top:411px;color:#111;letter-spacing:.1px">Ref No.:113133695722</span>
<span class="t" style="left:72px;top:428px;color:#555">9/4/2021 12:47:41 PM</span>
<span class="t b bl" style="left:271px;top:415px">Soccer / Over/Under</span>
<div style="left:272px;top:434px;width:2px;height:36px;background:#7f93b8"></div>
<span class="t" style="left:279px;top:436px;color:#444">Over</span>
<span class="t" style="left:279px;top:454px;color:#444">1.75</span>
<span class="t gy" style="left:271px;top:476px">Tenerife</span>
<svg style="position:absolute;left:315px;top:474px" width="36" height="16" font-family="Liberation Sans"><circle cx="8" cy="8" r="8" fill="#2d7bc2"/><text x="8" y="11.500" text-anchor="middle" font-size="10" font-weight="bold" fill="#fff">F</text><circle cx="28" cy="8" r="8" fill="#c23f98"/><text x="28" y="11.500" text-anchor="middle" font-size="10" font-weight="bold" fill="#fff">L</text></svg>
<span class="t gy" style="left:271px;top:494px">Ponferradina</span>
<span class="t b gy" style="left:271px;top:512px;font-size:11.800px;color:#7d7d7d">SPAIN SEGUNDA DIVISION</span>
<span class="t gy" style="left:271px;top:530px">09/04/2021 11:15 PM</span>
<span class="t r b" style="left:515px;width:100px;top:411px;color:#111">0.85</span>
<span class="t r" style="left:515px;width:100px;top:429px;color:#777">MY</span>
<span class="t r" style="left:645px;width:100px;top:411px;color:#666">200</span>
<span class="t r b" style="left:774px;width:100px;top:411px;color:#111">85.00</span>
<span class="t r b" style="left:774px;width:100px;top:429px;color:#111">0.25</span>
<span class="t" style="left:887px;top:411px;color:#555">Half Won</span>
<svg style="position:absolute;left:887px;top:427px" width="16" height="16"><rect width="16" height="16" rx="3" fill="#5270a5"/><rect x="3.500" y="3" width="9" height="8" fill="none" stroke="#fff"/><path d="M5 13h8V6" fill="none" stroke="#fff"/><path d="M5 5h6M5 7h6M5 9h6" stroke="#fff" stroke-width=".8"/></svg>
<span class="t" style="left:887px;top:445px;color:#555">171.224.180.154</span>

<!-- summary -->
<span style="position:absolute;white-space:nowrap;left:58px;top:584px;font-size:20.500px;line-height:24px;color:#111;font-family:'Liberation Sans',sans-serif;-webkit-text-stroke:.5px #111">wwin 4/9</span>
<span class="t r b" style="left:315px;width:300px;top:561px;color:#333;font-size:11.800px">Subtotal (Won)</span>
<span class="t r b" style="left:315px;width:300px;top:591px;color:#333;font-size:11.800px">Subtotal (Commission)</span>
<span class="t r b" style="left:315px;width:300px;top:621px;color:#333;font-size:11.800px">Total</span>
<span class="t r b" style="left:774px;width:100px;top:561px;color:#222">167.00</span>
<span class="t r b" style="left:774px;width:100px;top:591px;color:#222">0.50</span>
<span class="t r b" style="left:774px;width:100px;top:621px;color:#222">167.50</span>

<span class="t" style="left:15px;top:660px;color:#666;font-size:12px"><b style="color:#555">Note:</b> The outstanding bets may take some time to process. Please go to Bet List to view your latest outstanding bets.</span>
</div>
</body></html>
